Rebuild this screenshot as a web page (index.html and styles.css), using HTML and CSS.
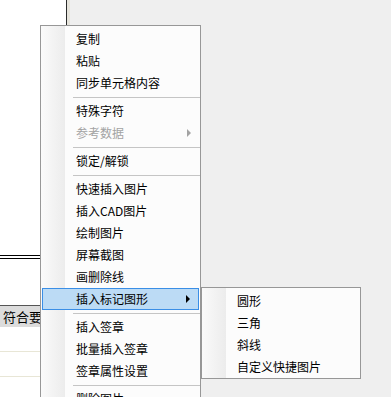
FILE: index.html
```html
<!DOCTYPE html>
<html lang="zh-CN">
<head>
    <meta charset="UTF-8">
    <meta name="viewport" content="width=device-width, initial-scale=1.0">
    <title>右键菜单</title>
    <link rel="stylesheet" href="styles.css">
</head>
<body>
    <div class="page">
        <!-- left sheet area -->
        <div class="sheet">
            <div class="double-rule"></div>
            <div class="grid-head">符合要求</div>
            <div class="grid-row"></div>
            <div class="grid-row"></div>
        </div>
        <div class="divider"></div>
        <div class="workspace"></div>
    </div>

    <!-- context menu -->
    <ul class="menu main-menu">
        <li class="item">复制</li>
        <li class="item">粘贴</li>
        <li class="item">同步单元格内容</li>
        <li class="sep"></li>
        <li class="item">特殊字符</li>
        <li class="item disabled has-sub">参考数据</li>
        <li class="sep"></li>
        <li class="item">锁定/解锁</li>
        <li class="sep"></li>
        <li class="item">快速插入图片</li>
        <li class="item">插入CAD图片</li>
        <li class="item">绘制图片</li>
        <li class="item">屏幕截图</li>
        <li class="item">画删除线</li>
        <li class="item active has-sub">插入标记图形</li>
        <li class="sep"></li>
        <li class="item">插入签章</li>
        <li class="item">批量插入签章</li>
        <li class="item">签章属性设置</li>
        <li class="sep"></li>
        <li class="item">删除图片</li>
    </ul>

    <ul class="menu sub-menu">
        <li class="item">圆形</li>
        <li class="item">三角</li>
        <li class="item">斜线</li>
        <li class="item">自定义快捷图片</li>
    </ul>
</body>
</html>
```

FILE: styles.css
```css
body {
    margin: 0;
    padding: 0;
    font-family: "Noto Sans CJK SC", "Liberation Sans", sans-serif;
    font-size: 12px;
    color: #000;
    overflow: hidden;
}
.page {
    display: flex;
    height: 397px;
    background-color: #efefef;
}
.sheet {
    width: 66px;
    background-color: #fff;
    padding-top: 255px;
    box-sizing: border-box;
}
.double-rule {
    height: 2px;
    border-top: 1px solid #000;
    border-bottom: 1px solid #000;
}
.grid-head {
    margin-top: 46px;
    height: 21px;
    border-top: 1px solid #555;
    background-color: #dcdcdc;
    padding-left: 3px;
    font-size: 13px;
    line-height: 21px;
    white-space: nowrap;
    overflow: hidden;
}
.grid-row {
    height: 24px;
    border-bottom: 1px solid #e8e6d6;
}
.divider {
    width: 1px;
    background-color: #2b2b2b;
    border-right: 3px solid #e6e4dc;
}
.workspace {
    flex: 1;
}

/* menus */
.menu {
    position: absolute;
    margin: 0;
    padding: 2px 0 0 0;
    list-style: none;
    border: 1px solid #979797;
    box-sizing: border-box;
    background: linear-gradient(to right, #fafafa 0, #ececec 24px, #fcfcfc 24px) no-repeat;
    background-color: #fcfcfc;
}
.main-menu {
    left: 40px;
    top: 25px;
    width: 161px;
    height: 400px;
}
.sub-menu {
    left: 201px;
    top: 287px;
    width: 160px;
    height: 92px;
}
.item {
    position: relative;
    height: 22px;
    line-height: 22px;
    padding-left: 35px;
    white-space: nowrap;
    box-sizing: border-box;
}
.item.disabled {
    color: #a3a3a3;
}
.item.active {
    margin: 0 1px;
    padding-left: 33px;
    line-height: 20px;
    background-color: #bcdbf5;
    border: 1px solid #3a8ee6;
}
.has-sub::after {
    content: "";
    position: absolute;
    right: 9px;
    top: 7px;
    border-left: 4px solid #000;
    border-top: 4px solid transparent;
    border-bottom: 4px solid transparent;
}
.item.active::after {
    right: 8px;
    top: 6px;
}
.item.disabled::after {
    border-left-color: #a3a3a3;
}
.sep {
    height: 6px;
    position: relative;
}
.sep::before {
    content: "";
    position: absolute;
    left: 32px;
    right: 0;
    top: 3px;
    height: 1px;
    background-color: #c5c5c5;
}
```
